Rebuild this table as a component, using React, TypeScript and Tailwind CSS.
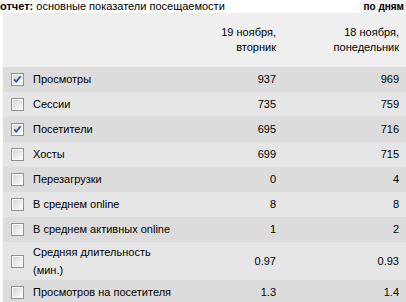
import React from "react";

type Row = {
  label: React.ReactNode;
  a: string;
  b: string;
  checked?: boolean;
  tall?: boolean;
};

const rows: Row[] = [
  { label: "Просмотры", a: "937", b: "969", checked: true },
  { label: "Сессии", a: "735", b: "759" },
  { label: "Посетители", a: "695", b: "716", checked: true },
  { label: "Хосты", a: "699", b: "715" },
  { label: "Перезагрузки", a: "0", b: "4" },
  { label: "В среднем online", a: "8", b: "8" },
  { label: "В среднем активных online", a: "1", b: "2" },
  {
    label: (
      <>
        Средняя длительность
        <br />
        (мин.)
      </>
    ),
    a: "0.97",
    b: "0.93",
    tall: true,
  },
  { label: "Просмотров на посетителя", a: "1.3", b: "1.4" },
];

function Checkbox({ checked }: { checked?: boolean }) {
  return (
    <svg width="13" height="13" viewBox="0 0 13 13" className="shrink-0">
      <defs>
        <linearGradient id="cbg" x1="0" y1="0" x2="1" y2="1">
          <stop offset="0" stopColor="#d6d6d6" />
          <stop offset="1" stopColor="#fbfbfb" />
        </linearGradient>
      </defs>
      <rect x="0.5" y="0.5" width="12" height="12" fill="#fff" stroke="#8e8f8f" />
      <rect x="2" y="2" width="9" height="9" fill="url(#cbg)" />
      {checked && (
        <path
          d="M3.2 6.3 L5.2 8.6 L9.6 3.4"
          fill="none"
          stroke="#3c52a3"
          strokeWidth="1.8"
        />
      )}
    </svg>
  );
}

export default function App() {
  return (
    <div
      className="h-[302px] w-[406px] overflow-hidden bg-white text-[11px] text-black"
      style={{ fontFamily: '"Liberation Sans", Arial, sans-serif' }}
    >
      {/* заголовок отчета */}
      <div className="flex h-[13px] items-start justify-between leading-[13px]">
        <div>
          <span className="font-bold">отчет:</span> основные показатели посещаемости
        </div>
        <div className="h-[13px] bg-[#f3f3f3] px-[2px] text-[10px] font-bold">по дням</div>
      </div>

      <div className="ml-[3px]">
        <div className="grid h-[54px] grid-cols-[minmax(0,1fr)_123px_123px] items-center bg-[#efefef] pr-[7px] leading-[15px]">
          <div />
          <div className="text-right">
            19 ноября,
            <br />
            вторник
          </div>
          <div className="text-right">
            18 ноября,
            <br />
            понедельник
          </div>
        </div>

        {rows.map((r, i) => (
          <div
            key={i}
            className={
              "grid grid-cols-[minmax(0,1fr)_123px_123px] items-center pr-[7px] " +
              (r.tall ? "h-[38px] leading-[18px] " : "h-[25px] ") +
              (i % 2 === 0 ? "bg-[#dcdcdc]" : "bg-[#e6e6e6]")
            }
          >
            <div className="flex items-center gap-[9px] whitespace-nowrap pl-[8px]">
              <Checkbox checked={r.checked} />
              <span>{r.label}</span>
            </div>
            <div className="text-right">{r.a}</div>
            <div className="text-right">{r.b}</div>
          </div>
        ))}
      </div>
    </div>
  );
}
